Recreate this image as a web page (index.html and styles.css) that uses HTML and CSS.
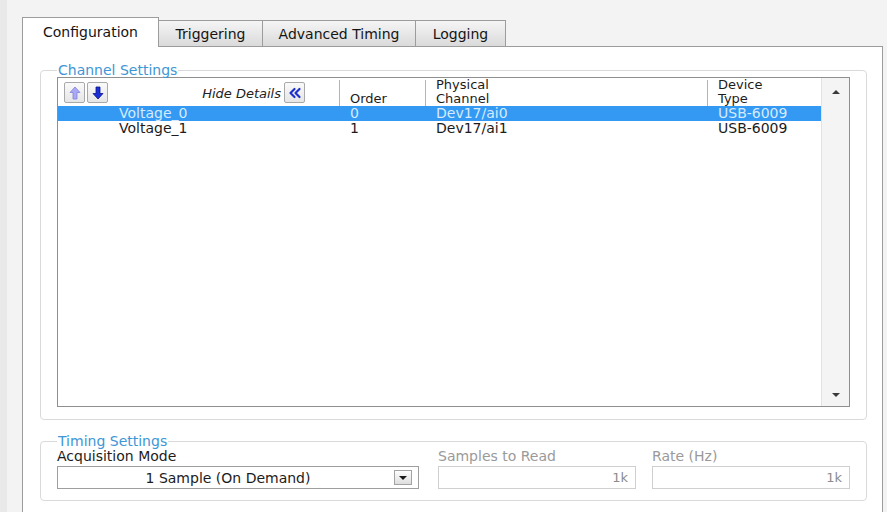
FILE: index.html
```html
<!DOCTYPE html>
<html>
<head>
<meta charset="utf-8">
<title>DAQ Assistant</title>
<link rel="stylesheet" href="styles.css">
</head>
<body>
<div class="window">
  <div class="tabs">
    <div class="tab tab-config active">Configuration</div>
    <div class="tab tab-trigger">Triggering</div>
    <div class="tab tab-timing">Advanced Timing</div>
    <div class="tab tab-log">Logging</div>
  </div>
  <div class="panel">
    <fieldset class="group channels">
      <legend>Channel Settings</legend>
      <div class="listbox">
        <div class="table">
          <div class="thead">
            <div class="cell name-head">
              <div class="tools">
                <button class="tool" type="button" aria-label="Move up">
                  <svg width="12" height="14" viewBox="0 0 12 14"><path d="M6 1 L11 6.5 L8 6.5 L8 13 L4 13 L4 6.5 L1 6.5 Z" fill="#aaa9f5" stroke="#8482d9" stroke-width="0.8" stroke-linejoin="round"/></svg>
                </button>
                <button class="tool" type="button" aria-label="Move down">
                  <svg width="12" height="14" viewBox="0 0 12 14"><path d="M6 13 L11 7.5 L8 7.5 L8 1 L4 1 L4 7.5 L1 7.5 Z" fill="#1b2fd9" stroke="#0b1585" stroke-width="0.8" stroke-linejoin="round"/></svg>
                </button>
              </div>
              <span class="hide-label">Hide Details</span>
              <button class="tool" type="button" aria-label="Hide details">
                <svg width="14" height="12" viewBox="0 0 14 12"><path d="M6.5 2 L2.5 6 L6.5 10 M11.5 2 L7.5 6 L11.5 10" fill="none" stroke="#1f2fc9" stroke-width="2.2" stroke-linecap="round" stroke-linejoin="round"/></svg>
              </button>
            </div>
            <div class="cell col col-order">Order</div>
            <div class="cell col">Physical<br>Channel</div>
            <div class="cell col">Device<br>Type</div>
          </div>
          <div class="row selected">
            <div class="cell name">Voltage_0</div>
            <div class="cell">0</div>
            <div class="cell">Dev17/ai0</div>
            <div class="cell">USB-6009</div>
          </div>
          <div class="row">
            <div class="cell name">Voltage_1</div>
            <div class="cell">1</div>
            <div class="cell">Dev17/ai1</div>
            <div class="cell">USB-6009</div>
          </div>
        </div>
        <div class="scrollbar">
          <span class="arrow arrow-up"></span>
          <span class="arrow arrow-down"></span>
        </div>
      </div>
    </fieldset>

    <fieldset class="group timing">
      <legend>Timing Settings</legend>
      <div class="fields">
        <div class="field field-mode">
          <div class="label">Acquisition Mode</div>
          <div class="select">
            <span class="select-value">1 Sample (On Demand)</span>
            <span class="select-btn"><span class="caret"></span></span>
          </div>
        </div>
        <div class="field field-num disabled">
          <div class="label">Samples to Read</div>
          <div class="numbox">1k</div>
        </div>
        <div class="field field-num disabled">
          <div class="label">Rate (Hz)</div>
          <div class="numbox">1k</div>
        </div>
      </div>
    </fieldset>
  </div>
</div>
</body>
</html>
```

FILE: styles.css
```css
html, body {
  margin: 0;
  height: 512px;
  overflow: hidden;
}

body {
  background: linear-gradient(to right, #e9e9e9 0 7px, #f3f3f3 7px);
  font-family: "DejaVu Sans", Verdana, sans-serif;
  font-size: 14px;
  color: #1c1c1c;
}

.window {
  height: 512px;
  box-sizing: border-box;
  padding: 17px 0 0 22px;
  display: flex;
  flex-direction: column;
}

/* ---- tab strip ---- */
.tabs {
  display: flex;
  align-items: flex-end;
  position: relative;
  z-index: 1;
  margin-bottom: -1px;
}

.tab {
  box-sizing: border-box;
  height: 27px;
  border: 1px solid #9c9c9c;
  margin-left: -1px;
  background: linear-gradient(#f5f5f5, #dadada);
  display: flex;
  align-items: center;
  justify-content: center;
  padding-top: 1px;
  color: #151515;
}

.tab.active {
  height: 30px;
  margin-left: 0;
  border-bottom: none;
  background: #fff;
  padding-bottom: 2px;
}

.tab-config { width: 137px; }
.tab-trigger { width: 105px; }
.tab-timing { width: 154px; }
.tab-log { width: 91px; }

/* ---- page panel ---- */
.panel {
  flex: 1;
  width: 861px;
  box-sizing: border-box;
  background: #fff;
  border: 1px solid #9c9c9c;
  border-bottom: none;
  padding: 16px 0 0 17px;
}

.group {
  margin: 0;
  width: 827px;
  box-sizing: border-box;
  border: 1px solid #dadada;
  border-radius: 4px;
}

.group legend {
  color: #4196d6;
  padding: 0 1px;
  line-height: 14px;
}

.channels {
  padding: 0 16px 12px 16px;
}

/* ---- channel list ---- */
.listbox {
  height: 330px;
  box-sizing: border-box;
  border: 1px solid #8f8f8f;
  display: flex;
}

.table {
  flex: 1;
}

.thead,
.row {
  display: grid;
  grid-template-columns: 281px 86px 282px 114px;
}

.thead {
  height: 28px;
}

.thead .cell {
  display: flex;
  align-items: flex-end;
  padding-left: 10px;
}

.thead .col {
  font-size: 13px;
  line-height: 14px;
  border-left: 1px solid #b4b4b4;
  margin-top: 2px;
  height: 26px;
  box-sizing: border-box;
}

.name-head {
  align-items: center !important;
  padding-left: 6px !important;
  padding-right: 34px;
}

.tools {
  display: flex;
  gap: 2px;
  margin-top: 1px;
}

.tool {
  width: 21px;
  height: 21px;
  padding: 0;
  margin: 0;
  border: 1px solid #a9a9a9;
  border-radius: 2px;
  background: linear-gradient(#fafafa, #e6e6e6);
  display: flex;
  align-items: center;
  justify-content: center;
}

.name-head > .tool {
  margin-top: 1px;
  margin-left: 3px;
}

.hide-label {
  margin-left: auto;
  font-size: 13px;
  font-style: italic;
  margin-top: 2px;
  color: #222;
}

.row {
  height: 15px;
  line-height: 15px;
}

.row .cell {
  padding-left: 11px;
  white-space: nowrap;
}

.row .cell.name {
  padding-left: 61px;
}

.row.selected {
  background: #3399f3;
  color: #d6ebff;
}

.scrollbar {
  width: 28px;
  background: #f4f4f4;
  border-left: 1px solid #e2e2e2;
  display: flex;
  flex-direction: column;
  justify-content: space-between;
  align-items: center;
  padding: 12px 0 9px;
  box-sizing: border-box;
}

.arrow {
  width: 0;
  height: 0;
  border-left: 4px solid transparent;
  border-right: 4px solid transparent;
}

.arrow-up {
  border-bottom: 4px solid #3a3a3a;
}

.arrow-down {
  border-top: 4px solid #3a3a3a;
}

/* ---- timing ---- */
.timing {
  margin-top: 14px;
  padding: 0 16px 11px 16px;
}

.fields {
  display: flex;
}

.field .label {
  line-height: 14px;
  margin-top: 1px;
  margin-bottom: 3px;
}

.field-mode {
  width: 362px;
  margin-right: 19px;
}

.field-num {
  width: 198px;
}

.field-num + .field-num {
  margin-left: 16px;
}

.disabled .label {
  color: #9a9a9a;
}

.select {
  height: 23px;
  box-sizing: border-box;
  border: 1px solid #9e9e9e;
  display: flex;
  align-items: center;
  padding-right: 6px;
}

.select-value {
  flex: 1;
  text-align: center;
  padding-left: 4px;
}

.select-btn {
  width: 18px;
  height: 15px;
  box-sizing: border-box;
  border: 1px solid #a3a3a3;
  background: linear-gradient(#fdfdfd, #dedede);
  display: flex;
  align-items: center;
  justify-content: center;
}

.caret {
  width: 0;
  height: 0;
  border-left: 4px solid transparent;
  border-right: 4px solid transparent;
  border-top: 4px solid #1a1a1a;
  margin-top: 1px;
}

.numbox {
  height: 23px;
  box-sizing: border-box;
  border: 1px solid #cfcfcf;
  text-align: right;
  line-height: 21px;
  padding-right: 7px;
  color: #8c8c8c;
  font-size: 13px;
}
```
